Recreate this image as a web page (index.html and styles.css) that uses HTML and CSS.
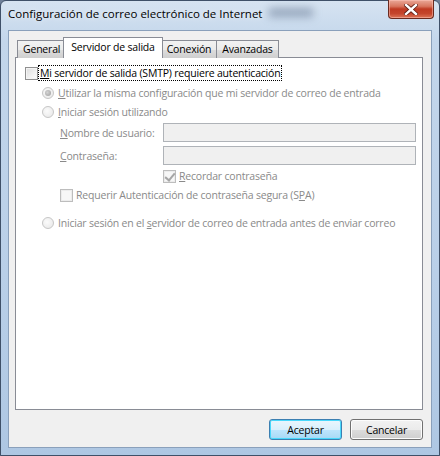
FILE: index.html
```html
<!DOCTYPE html>
<html lang="es">
<head>
  <meta charset="UTF-8" />
  <title>Configuración de correo electrónico de Internet</title>
  <link rel="stylesheet" href="styles.css">
</head>
<body>

<div class="window">
  <div class="glass-blob"></div>
  <div class="titlebar">
    <span class="title">Configuración de correo electrónico de Internet</span>
    <div class="close-btn">
      <svg width="14" height="11" viewBox="0 0 14 11">
        <path d="M2 1 L12 10 M12 1 L2 10" stroke="#5a1a10" stroke-width="4" stroke-linecap="square"/>
        <path d="M2 1 L12 10 M12 1 L2 10" stroke="#fff" stroke-width="2.4" stroke-linecap="square"/>
      </svg>
    </div>
  </div>

  <div class="client">
    <div class="tabs">
      <div class="tab">General</div>
      <div class="tab active">Servidor de salida</div>
      <div class="tab">Conexión</div>
      <div class="tab">Avanzadas</div>
    </div>

    <div class="panel">
      <div class="row row-auth">
        <span class="checkbox"></span>
        <span class="focus"><u>M</u>i servidor de salida (SMTP) requiere autenticación</span>
      </div>
      <div class="row row-same disabled">
        <span class="radio checked"></span>
        <span><u>U</u>tilizar la misma configuración que mi servidor de correo de entrada</span>
      </div>
      <div class="row row-login disabled">
        <span class="radio"></span>
        <span><u>I</u>niciar sesión utilizando</span>
      </div>
      <div class="row row-field row-user disabled">
        <span class="field-label"><u>N</u>ombre de usuario:</span>
        <span class="input"></span>
      </div>
      <div class="row row-field row-pass disabled">
        <span class="field-label"><u>C</u>ontraseña:</span>
        <span class="input"></span>
      </div>
      <div class="row row-remember disabled">
        <span class="checkbox checked"></span>
        <span><u>R</u>ecordar contraseña</span>
      </div>
      <div class="row row-spa">
        <span class="checkbox"></span>
        <span class="muted">Requerir Autenticación de contraseña segura (S<u>P</u>A)</span>
      </div>
      <div class="row row-before disabled">
        <span class="radio"></span>
        <span>Iniciar sesión en el <u>s</u>ervidor de correo de entrada antes de enviar correo</span>
      </div>
    </div>

    <div class="buttons">
      <button class="btn default">Aceptar</button>
      <button class="btn">Cancelar</button>
    </div>
  </div>
</div>

</body>
</html>
```

FILE: styles.css
```css
body {
  margin: 0;
  width: 440px;
  height: 456px;
  overflow: hidden;
  font-family: 'Open Sans', 'Noto Sans', sans-serif;
  font-size: 10.5px;
  letter-spacing: -0.2px;
  color: #000;
  background: #6f8099;
}
.window {
  position: relative;
  height: 456px;
  box-sizing: border-box;
  padding: 0 7px 7px 7px;
  border: 1px solid #3f5068;
  border-radius: 6px 6px 0 0;
  background: linear-gradient(to bottom, #d6e3f1 0, #c3d6eb 40px, #b9cfe8 60%, #aec7e3 100%);
  display: flex;
  flex-direction: column;
}
.glass-blob {
  position: absolute;
  left: 268px;
  top: 7px;
  width: 44px;
  height: 9px;
  background: rgba(60, 80, 110, 0.4);
  filter: blur(4px);
}
.titlebar {
  position: relative;
  height: 29px;
  display: flex;
  align-items: center;
}
.title {
  font-size: 11.5px;
  letter-spacing: 0;
  margin-top: -4px;
  text-shadow: 0 0 6px rgba(255, 255, 255, 0.9);
}
.close-btn {
  position: absolute;
  top: -1px;
  right: -2px;
  width: 46px;
  height: 19px;
  box-sizing: border-box;
  border: 1px solid #6a2a1f;
  border-top: none;
  border-radius: 0 0 4px 4px;
  background: linear-gradient(to bottom, #eaa898 0, #d8765f 35%, #bf3a22 50%, #c4452c 75%, #dc7456 100%);
  box-shadow: inset 0 0 0 1px rgba(255, 200, 190, 0.5);
  display: flex;
  align-items: center;
  justify-content: center;
}
.client {
  flex: 1;
  box-sizing: border-box;
  background: #f0f0f0;
  border: 1px solid #8aa0bb;
  padding: 6px 8px 0 6px;
  display: flex;
  flex-direction: column;
}
.tabs {
  display: flex;
  align-items: flex-end;
  padding-left: 2px;
  height: 21px;
  position: relative;
  z-index: 1;
  margin-bottom: -1px;
}
.tab {
  height: 18px;
  line-height: 17px;
  box-sizing: border-box;
  padding: 0 5px;
  border: 1px solid #898c95;
  border-bottom: none;
  margin-right: -1px;
  background: linear-gradient(to bottom, #f2f2f2 0, #ebebeb 50%, #dddddd 51%, #cfcfcf 100%);
}
.tab.active {
  height: 21px;
  line-height: 18px;
  margin: 0 -2px 0 -2px;
  padding: 0 7px 2px;
  background: #fff;
  position: relative;
  z-index: 2;
}
.panel {
  height: 353px;
  box-sizing: border-box;
  background: #fff;
  border: 1px solid #898c95;
  padding: 6px 0 0 9px;
}
.row {
  display: flex;
  align-items: center;
  height: 18px;
  white-space: nowrap;
}
.disabled, .muted {
  color: #8a8a8a;
}
.row-same {
  margin-top: 1px;
  height: 20px;
  padding-left: 17px;
}
.row-login {
  padding-left: 17px;
}
.row-field {
  height: 19px;
  padding-left: 35px;
}
.row-user {
  margin-top: 2px;
}
.row-pass {
  margin-top: 4px;
}
.row-remember {
  margin-top: 2px;
  padding-left: 138px;
}
.row-spa {
  margin-top: 1px;
  padding-left: 35px;
}
.row-before {
  margin-top: 10px;
  padding-left: 17px;
}
.field-label {
  width: 103px;
}
.input {
  width: 253px;
  height: 19px;
  box-sizing: border-box;
  border: 1px solid #afb3b8;
  background: #f0f0f0;
}
.checkbox {
  width: 13px;
  height: 13px;
  box-sizing: border-box;
  border: 1px solid #8f8f8f;
  background: linear-gradient(135deg, #dcdcdc 0, #f5f5f5 70%, #fff 100%);
  box-shadow: inset 0 0 0 1px #f4f4f4;
  margin-right: 3px;
  position: relative;
  flex-shrink: 0;
}
.row-auth .checkbox {
  margin-right: 1px;
}
.row-remember .checkbox,
.row-spa .checkbox {
  border-color: #bdbdbd;
  background: #f7f7f7;
  box-shadow: inset 0 0 0 1px #ececec;
}
.checkbox.checked::after {
  content: '';
  position: absolute;
  left: 3px;
  top: 0;
  width: 4px;
  height: 8px;
  border: solid #a6a6a6;
  border-width: 0 2px 2px 0;
  transform: rotate(40deg);
}
.focus {
  outline: 1px dotted #000;
  outline-offset: 0;
  padding: 0 1px;
  line-height: 14px;
}
.radio {
  width: 12px;
  height: 12px;
  box-sizing: border-box;
  border-radius: 50%;
  border: 1px solid #c6c6c6;
  background: radial-gradient(circle at 40% 40%, #fbfbfb 0, #ececec 70%);
  margin-right: 4px;
  position: relative;
  flex-shrink: 0;
}
.radio.checked::after {
  content: '';
  position: absolute;
  left: 2px;
  top: 2px;
  width: 6px;
  height: 6px;
  border-radius: 50%;
  background: radial-gradient(circle at 40% 40%, #d4d4d4 0, #9c9c9c 100%);
}
.buttons {
  display: flex;
  justify-content: flex-end;
  gap: 8px;
  margin-top: 9px;
}
.btn {
  width: 73px;
  height: 21px;
  font-family: inherit;
  font-size: 10.5px;
  letter-spacing: -0.2px;
  color: #000;
  padding: 0;
  border: 1px solid #707070;
  border-radius: 3px;
  background: linear-gradient(to bottom, #f2f2f2 0, #ebebeb 50%, #dddddd 51%, #cfcfcf 100%);
  box-shadow: inset 0 0 0 1px #fcfcfc;
}
.btn.default {
  border-color: #3c7fb1;
  background: linear-gradient(to bottom, #eaf6fd 0, #d9f0fc 50%, #bee6fd 51%, #a7d9f5 100%);
  box-shadow: inset 0 0 0 1px #48d8fb;
}
```
